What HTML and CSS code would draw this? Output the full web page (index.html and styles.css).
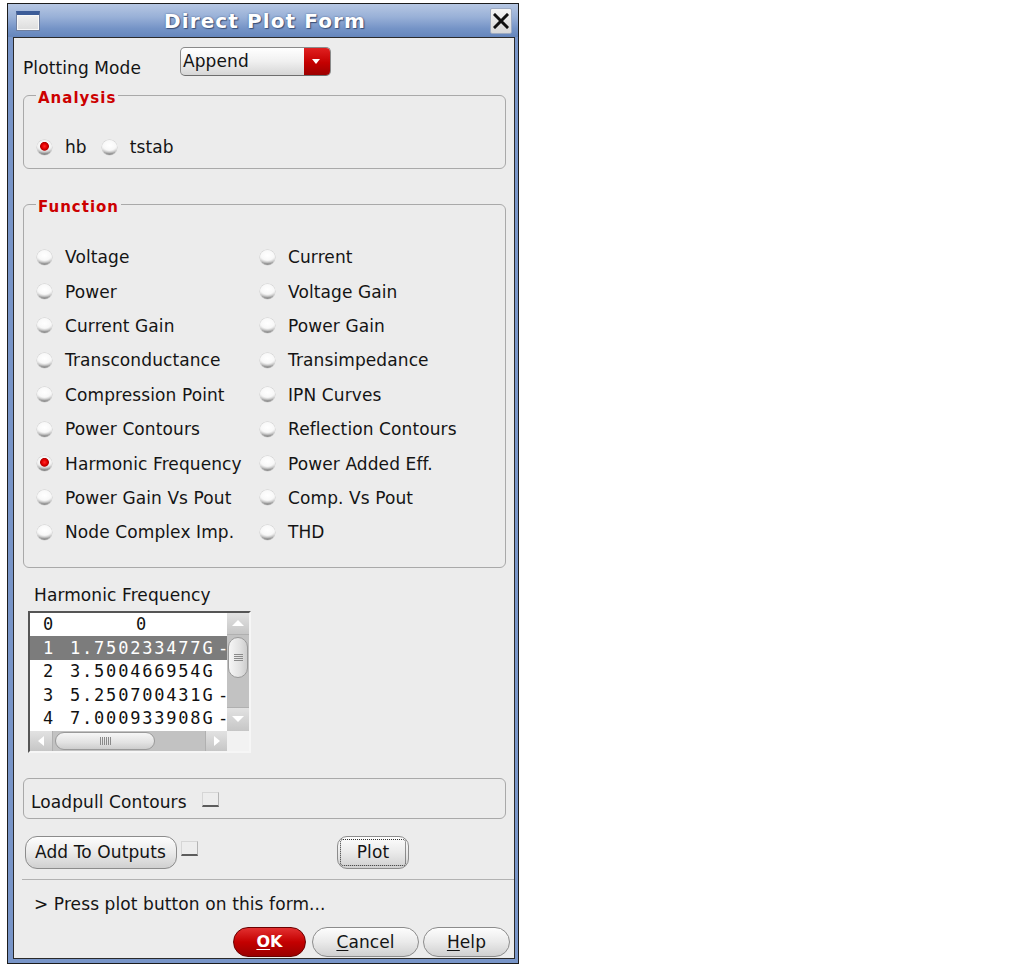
FILE: index.html
```html
<!DOCTYPE html>
<html>
<head>
<meta charset="utf-8">
<title>Direct Plot Form</title>
<link rel="stylesheet" href="styles.css">
</head>
<body>
<div class="window">
  <div class="titlebar">
    <span class="win-icon"></span>
    <span class="title">Direct Plot Form</span>
    <span class="close"><svg width="16" height="16" viewBox="0 0 16 16"><path d="M2 2 L14 14 M14 2 L2 14" stroke="#111" stroke-width="3" stroke-linecap="square"/></svg></span>
  </div>
  <div class="panel">
    <div class="mode-row">
      <span class="mode-label">Plotting Mode</span>
      <div class="combo">
        <span class="combo-text">Append</span>
        <span class="combo-btn"><span class="tri-down"></span></span>
      </div>
    </div>

    <fieldset class="group">
      <legend>Analysis</legend>
      <div class="radio-line">
        <span class="radio on"><span class="dot"></span>hb</span>
        <span class="radio second"><span class="dot"></span>tstab</span>
      </div>
    </fieldset>

    <fieldset class="group function">
      <legend>Function</legend>
      <div class="fgrid">
        <span class="radio"><span class="dot"></span>Voltage</span>
        <span class="radio"><span class="dot"></span>Current</span>
        <span class="radio"><span class="dot"></span>Power</span>
        <span class="radio"><span class="dot"></span>Voltage Gain</span>
        <span class="radio"><span class="dot"></span>Current Gain</span>
        <span class="radio"><span class="dot"></span>Power Gain</span>
        <span class="radio"><span class="dot"></span>Transconductance</span>
        <span class="radio"><span class="dot"></span>Transimpedance</span>
        <span class="radio"><span class="dot"></span>Compression Point</span>
        <span class="radio"><span class="dot"></span>IPN Curves</span>
        <span class="radio"><span class="dot"></span>Power Contours</span>
        <span class="radio"><span class="dot"></span>Reflection Contours</span>
        <span class="radio on"><span class="dot"></span>Harmonic Frequency</span>
        <span class="radio"><span class="dot"></span>Power Added Eff.</span>
        <span class="radio"><span class="dot"></span>Power Gain Vs Pout</span>
        <span class="radio"><span class="dot"></span>Comp. Vs Pout</span>
        <span class="radio"><span class="dot"></span>Node Complex Imp.</span>
        <span class="radio"><span class="dot"></span>THD</span>
      </div>
    </fieldset>

    <div class="hf-label">Harmonic Frequency</div>
    <div class="listbox">
      <div class="list-rows">
        <div class="lrow"><span class="c1">0</span><span class="c2">0</span></div>
        <div class="lrow sel"><span class="c1">1</span><span class="c2">1.750233477G</span><span class="c3">-</span></div>
        <div class="lrow"><span class="c1">2</span><span class="c2">3.500466954G</span></div>
        <div class="lrow"><span class="c1">3</span><span class="c2">5.250700431G</span><span class="c3">-</span></div>
        <div class="lrow"><span class="c1">4</span><span class="c2">7.000933908G</span><span class="c3">-</span></div>
      </div>
      <div class="vscroll">
        <span class="sb-btn v-up"><span class="tri-up"></span></span>
        <span class="vtrack"><span class="vthumb"><span class="vgrip"></span></span></span>
        <span class="sb-btn v-down"><span class="tri-dn"></span></span>
      </div>
      <div class="hscroll">
        <span class="sb-btn h-left"><span class="tri-left"></span></span>
        <span class="htrack"><span class="hthumb"><span class="hgrip"></span></span></span>
        <span class="sb-btn h-right"><span class="tri-right"></span></span>
      </div>
      <div class="corner"></div>
    </div>

    <div class="loadpull">
      <span>Loadpull Contours</span>
      <span class="check lp-check"></span>
    </div>

    <div class="action-row">
      <button class="btn add">Add To Outputs</button>
      <span class="check add-check"></span>
      <button class="btn plot"><span class="focus">Plot</span></button>
    </div>

    <div class="sep"></div>
    <div class="status">&gt; Press plot button on this form...</div>

    <div class="footer">
      <button class="btn pill ok"><u>O</u>K</button>
      <button class="btn pill cancel"><u>C</u>ancel</button>
      <button class="btn pill help"><u>H</u>elp</button>
    </div>
  </div>
</div>
</body>
</html>
```

FILE: styles.css
```css
* { box-sizing: border-box; }
html, body { margin: 0; padding: 0; background: #ffffff; }
body {
  font-family: "DejaVu Sans", "Bitstream Vera Sans", sans-serif;
  font-size: 17px;
  letter-spacing: 0.1px;
  color: #141414;
}

.window {
  width: 512px;
  margin: 3px 0 0 7px;
  border: 1px solid #1c1c1c;
  background: #7895c8;
  padding-bottom: 4px;
}

.titlebar {
  height: 33px;
  display: flex;
  align-items: center;
  background: linear-gradient(to bottom, #b6c7e3 0%, #98b0d7 40%, #7493c6 75%, #6586bc 100%);
}
.win-icon {
  width: 24px;
  height: 20px;
  margin-left: 8px;
  border: 1px solid #6f7f9f;
  border-top: 4px solid #3c5c98;
  background: linear-gradient(#f2f2f2, #dcdcdc);
  box-shadow: inset 0 0 0 1px #f8f8f8;
}
.title {
  flex: 1;
  text-align: center;
  color: #ffffff;
  font-size: 20px;
  font-weight: bold;
  letter-spacing: 1.1px;
  text-shadow: 1px 1px 1px #3a4f77, 0 0 2px #4d648f;
}
.close {
  width: 22px;
  height: 26px;
  margin-right: 6px;
  border: 1px solid #9eabc2;
  border-radius: 2px;
  background: linear-gradient(#f4f4f4, #d8d8d8);
  display: flex;
  align-items: center;
  justify-content: center;
}

.panel {
  margin: 0 3px 0 5px;
  border: 1px solid #2a2a2a;
  background: #ececec;
  padding-bottom: 1px;
}

/* Plotting mode */
.mode-row {
  display: flex;
  align-items: flex-start;
  margin-top: 9px;
  padding-left: 9px;
  height: 31px;
}
.mode-label {
  width: 157px;
  margin-top: 11px;
  line-height: 20px;
}
.combo {
  width: 151px;
  height: 29px;
  display: flex;
  border: 1px solid #8a8a8a;
  border-bottom-color: #6e6e6e;
  border-radius: 5px;
  background: linear-gradient(#ffffff, #f0f0f0 50%, #d6d6d6);
  overflow: hidden;
}
.combo-text {
  flex: 1;
  padding-left: 2px;
  line-height: 27px;
}
.combo-btn {
  width: 26px;
  background: linear-gradient(#e02020, #c40000 55%, #9c0000);
  display: flex;
  align-items: center;
  justify-content: center;
}
.tri-down {
  width: 0; height: 0;
  border-left: 4px solid transparent;
  border-right: 4px solid transparent;
  border-top: 5px solid #ffffff;
  margin-right: 3px;
}

/* Group boxes */
fieldset.group {
  margin: 6px 8px 0 9px;
  padding: 0;
  border: 1px solid #a9a9a9;
  border-radius: 6px;
  min-width: 0;
}
fieldset.group legend {
  margin-left: 12px;
  padding: 6px 2px 0 2px;
  line-height: 16px;
  font-size: 15px;
  font-weight: bold;
  letter-spacing: 1px;
  color: #cc0000;
}
fieldset.function { margin-top: 24px; }

.radio-line {
  display: flex;
  padding: 31px 0 11px 13px;
  line-height: 20px;
}
.radio {
  display: flex;
  align-items: center;
  line-height: 20px;
  white-space: nowrap;
}
.radio.second { margin-left: 15px; }
.dot {
  width: 15px;
  height: 15px;
  border-radius: 50%;
  margin-right: 13px;
  flex: none;
  background:
    radial-gradient(ellipse 70% 55% at 50% 35%, #ffffff 0%, #f8f8f8 60%, rgba(248,248,248,0) 100%),
    linear-gradient(to bottom, #f4f4f4 0%, #e8e8e8 45%, #b9b9b9 70%, #8a8a8a 100%);
  box-shadow: 0 0 0 0.5px rgba(150,150,150,0.35);
}
.radio.on .dot {
  background:
    radial-gradient(circle at 50% 42%, #ff2a2a 0, #e60000 2.5px, #b40000 4px, rgba(150,0,0,0) 4.8px),
    radial-gradient(ellipse 70% 55% at 50% 35%, #ffffff 0%, #f4f4f4 60%, rgba(244,244,244,0) 100%),
    linear-gradient(to bottom, #f0f0f0 0%, #e2e2e2 45%, #b0b0b0 70%, #828282 100%);
}

.fgrid {
  display: grid;
  grid-template-columns: 223px 1fr;
  grid-auto-rows: 34.4px;
  padding: 25px 0 17px 13px;
}

/* Harmonic frequency list */
.hf-label {
  margin: 17px 0 0 20px;
  line-height: 20px;
}
.listbox {
  margin: 6px 0 0 14px;
  width: 223px;
  height: 142px;
  border: 2px solid;
  border-color: #555555 #f6f6f6 #f6f6f6 #555555;
  background: #ffffff;
  display: grid;
  grid-template-columns: 1fr 22px;
  grid-template-rows: 1fr 20px;
  letter-spacing: 0;
}
.list-rows {
  overflow: hidden;
  font-family: "DejaVu Sans Mono", "Liberation Mono", monospace;
  font-size: 17px;
  color: #111;
}
.lrow {
  height: 23.5px;
  display: flex;
  align-items: center;
  white-space: pre;
}
.lrow.sel { background: #7c7c7c; color: #ffffff; }
.c1 { width: 36px; flex: none; text-align: center; }
.c2 { width: 148px; flex: none; text-align: center; letter-spacing: 1.8px; padding-left: 4px; }
.c3 { padding-left: 4px; }

.vscroll {
  display: flex;
  flex-direction: column;
}
.sb-btn {
  display: flex;
  align-items: center;
  justify-content: center;
  background: linear-gradient(#e2e2e2, #c6c6c6);
  flex: none;
}
.v-up { height: 22px; border-bottom: 1px solid #b0b0b0; }
.v-down { height: 24px; border-top: 1px solid #b0b0b0; }
.vtrack {
  flex: 1;
  background: #c2c2c2;
  padding: 2px 1px 0 1px;
}
.vthumb {
  display: flex;
  align-items: center;
  justify-content: center;
  height: 41px;
  border: 1px solid #9a9a9a;
  border-radius: 10px;
  background: linear-gradient(to right, #f6f6f6, #e2e2e2 60%, #cdcdcd);
}
.vgrip {
  width: 9px;
  height: 7px;
  background: repeating-linear-gradient(to bottom, #8a8a8a 0 1px, transparent 1px 2px);
}
.hscroll { display: flex; }
.h-left { width: 23px; border-right: 1px solid #b0b0b0; }
.h-right { width: 22px; border-left: 1px solid #b0b0b0; }
.htrack {
  flex: 1;
  background: #c2c2c2;
  padding: 1px 0 1px 2px;
  display: flex;
}
.hthumb {
  width: 100px;
  display: flex;
  align-items: center;
  justify-content: center;
  border: 1px solid #9a9a9a;
  border-radius: 10px;
  background: linear-gradient(#f6f6f6, #e2e2e2 60%, #cdcdcd);
}
.hgrip {
  width: 11px;
  height: 8px;
  background: repeating-linear-gradient(to right, #8a8a8a 0 1px, transparent 1px 2px);
}
.corner { background: #f2f2f2; }
.tri-up {
  width: 0; height: 0;
  border-left: 6px solid transparent;
  border-right: 6px solid transparent;
  border-bottom: 6px solid #ffffff;
}
.tri-dn {
  width: 0; height: 0;
  border-left: 6px solid transparent;
  border-right: 6px solid transparent;
  border-top: 6px solid #ffffff;
}
.tri-left {
  width: 0; height: 0;
  border-top: 5px solid transparent;
  border-bottom: 5px solid transparent;
  border-right: 6px solid #ffffff;
}
.tri-right {
  width: 0; height: 0;
  border-top: 5px solid transparent;
  border-bottom: 5px solid transparent;
  border-left: 6px solid #ffffff;
}

/* Loadpull */
.loadpull {
  margin: 25px 8px 0 9px;
  border: 1px solid #a9a9a9;
  border-radius: 6px;
  padding: 13px 0 6px 7px;
  display: flex;
  align-items: flex-start;
  line-height: 20px;
}
.check {
  display: inline-block;
  width: 17px;
  height: 15px;
  flex: none;
  background: #ededed;
  border: 1px solid #d6d6d6;
  border-right-color: #b4b4b4;
  border-bottom: 2px solid #5c5c5c;
}
.lp-check { margin: 0 0 0 15px; }

/* Action row */
.action-row {
  display: flex;
  align-items: flex-start;
  margin: 17px 0 0 11px;
}
.btn {
  font-family: inherit;
  font-size: 17px;
  letter-spacing: 0.1px;
  color: #141414;
  height: 33px;
  padding: 0;
  border: 1px solid #8c8c8c;
  border-radius: 12px;
  background: linear-gradient(#fdfdfd, #eaeaea 50%, #d0d0d0);
  line-height: 31px;
  cursor: default;
}
.add { width: 152px; padding: 0 6px 0 9px; text-align: left; }
.add-check { margin: 5px 0 0 4px; }
.plot {
  width: 72px;
  margin-left: 139px;
  padding: 2px;
  border-radius: 10px;
}
.focus {
  display: block;
  height: 27px;
  line-height: 25px;
  border: 1px dotted #303030;
  border-radius: 3px;
}

.sep {
  margin: 10px 0 0 8px;
  height: 1px;
  background: #b2b2b2;
}
.status {
  margin: 14px 0 0 20px;
  line-height: 20px;
}

.footer {
  display: flex;
  justify-content: flex-end;
  margin-top: 13px;
  padding-right: 4px;
}
.pill {
  height: 30px;
  line-height: 28px;
  border-radius: 15px;
  text-align: center;
}
.ok {
  width: 73px;
  margin-right: 6px;
  color: #ffffff;
  font-weight: bold;
  font-size: 16px;
  border-color: #6a0000;
  background: linear-gradient(#e23030, #c40000 50%, #9a0000);
}
.cancel { width: 107px; margin-right: 4px; }
.help { width: 87px; }
u { text-decoration-thickness: 1px; text-underline-offset: 2px; }
```
